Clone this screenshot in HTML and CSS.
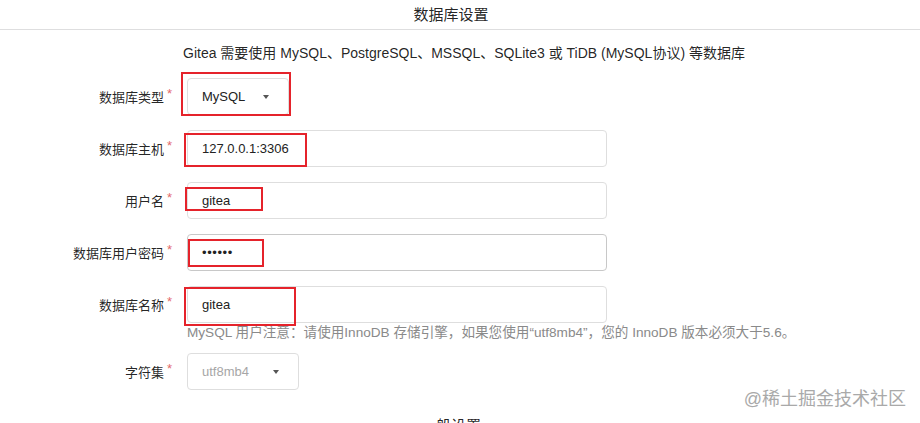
FILE: index.html
```html
<!doctype html>
<html lang="zh-CN">
<head>
	<meta charset="utf-8">
	<title>数据库设置</title>
	<link rel="stylesheet" href="styles.css">
</head>
<body>

<div class="page">
	<h4 class="section-title">数据库设置</h4>
	<p class="intro">Gitea 需要使用 MySQL、PostgreSQL、MSSQL、SQLite3 或 TiDB (MySQL协议) 等数据库</p>

	<form class="db-form" action="#">
		<div class="field">
			<label class="field-label required">数据库类型</label>
			<div class="control">
				<div class="dropdown db-type">MySQL<i class="caret"></i></div>
				<span class="mark mark-type"></span>
			</div>
		</div>

		<div class="field">
			<label class="field-label required">数据库主机</label>
			<div class="control">
				<input class="text-input" type="text" value="127.0.0.1:3306">
				<span class="mark mark-host"></span>
			</div>
		</div>

		<div class="field">
			<label class="field-label required">用户名</label>
			<div class="control">
				<input class="text-input" type="text" value="gitea">
				<span class="mark mark-user"></span>
			</div>
		</div>

		<div class="field">
			<label class="field-label required">数据库用户密码</label>
			<div class="control">
				<div class="text-input pass-input"><span class="dots">••••••</span></div>
				<span class="mark mark-pass"></span>
			</div>
		</div>

		<div class="field">
			<label class="field-label required">数据库名称</label>
			<div class="control">
				<input class="text-input" type="text" value="gitea">
				<span class="mark mark-name"></span>
			</div>
		</div>
		<div class="help-row">
			<span class="help">MySQL 用户注意：请使用InnoDB 存储引擎，如果您使用“utf8mb4”，您的 InnoDB 版本必须大于5.6。</span>
		</div>

		<div class="field charset-field">
			<label class="field-label required">字符集</label>
			<div class="control">
				<div class="dropdown charset">utf8mb4<i class="caret"></i></div>
			</div>
		</div>
	</form>

	<h4 class="section-title next">一般设置</h4>

	<div class="watermark">@稀土掘金技术社区</div>
</div>

</body>
</html>
```

FILE: styles.css
```css
html,body{
	margin: 0;
	padding: 0;
	background: #fff;
	height: 100%;
	overflow: hidden;
}
*{
	box-sizing: border-box;
}
.page{
	position: relative;
	height: 423px;
	font-family: "Liberation Sans", "Noto Sans CJK SC", sans-serif;
	font-size: 13px;
	color: rgba(0,0,0,.87);
}
.section-title{
	margin: 0;
	height: 30px;
	line-height: 29px;
	border-bottom: 1px solid #dededf;
	font-size: 15px;
	font-weight: 400;
	text-align: center;
	padding-right: 18px;
}
.section-title.next{
	margin-top: 21px;
	border-bottom: none;
}
.intro{
	margin: 14px 0 16px;
	padding-left: 183px;
	font-size: 14px;
	line-height: 18px;
}

/* form rows: label column, then the control */
.field{
	display: grid;
	grid-template-columns: 172px 420px;
	column-gap: 15px;
	align-items: center;
	margin-bottom: 15px;
}
.field-label{
	text-align: right;
	white-space: nowrap;
}
.field-label.required:after{
	content: "*";
	color: #e46b6b;
	margin-left: 3px;
	position: relative;
	top: -4px;
}
.control{
	position: relative;
}
.text-input{
	display: block;
	width: 100%;
	height: 37px;
	margin: 0;
	padding: 0 14px;
	border: 1px solid #dedede;
	border-radius: 4px;
	font-family: inherit;
	font-size: 13px;
	color: #222;
	background: #fff;
	outline: none;
}
.pass-input{
	display: flex;
	align-items: center;
	border-color: #c8c8c8;
}
.dots{
	font-size: 13px;
	letter-spacing: 0.6px;
	color: #222;
}
.dropdown{
	display: flex;
	align-items: center;
	height: 37px;
	padding: 0 0 0 14px;
	border: 1px solid #dedede;
	border-radius: 4px;
	color: #222;
}
.db-type{
	width: 102px;
}
.charset{
	width: 112px;
	color: #a6a6a6;
}
.caret{
	margin-left: auto;
	margin-right: 19px;
	width: 0;
	height: 0;
	border-left: 3.5px solid transparent;
	border-right: 3.5px solid transparent;
	border-top: 4px solid #555;
}
.help-row{
	padding-left: 187px;
	margin-top: -15px;
	margin-bottom: 10px;
	line-height: 20px;
}
.help{
	color: #8a8a8a;
	font-size: 13.6px;
}
.charset-field{
	margin-bottom: 0;
}

/* red annotation frames drawn over the fields */
.mark{
	position: absolute;
	border: 2px solid #e5232b;
	pointer-events: none;
}
.mark-type{ left: -6px; top: -6px; width: 110px; height: 44px; }
.mark-host{ left: -3px; top: 3px; width: 123px; height: 34px; }
.mark-user{ left: -2px; top: 5px; width: 78px; height: 24px; }
.mark-pass{ left: 1px; top: 5px; width: 76px; height: 28px; }
.mark-name{ left: -3px; top: 1px; width: 112px; height: 39px; }

.watermark{
	position: absolute;
	right: 14px;
	bottom: 13px;
	font-size: 18px;
	color: #a9a9a9;
	text-shadow: 0 0 1px #fff;
}
```
